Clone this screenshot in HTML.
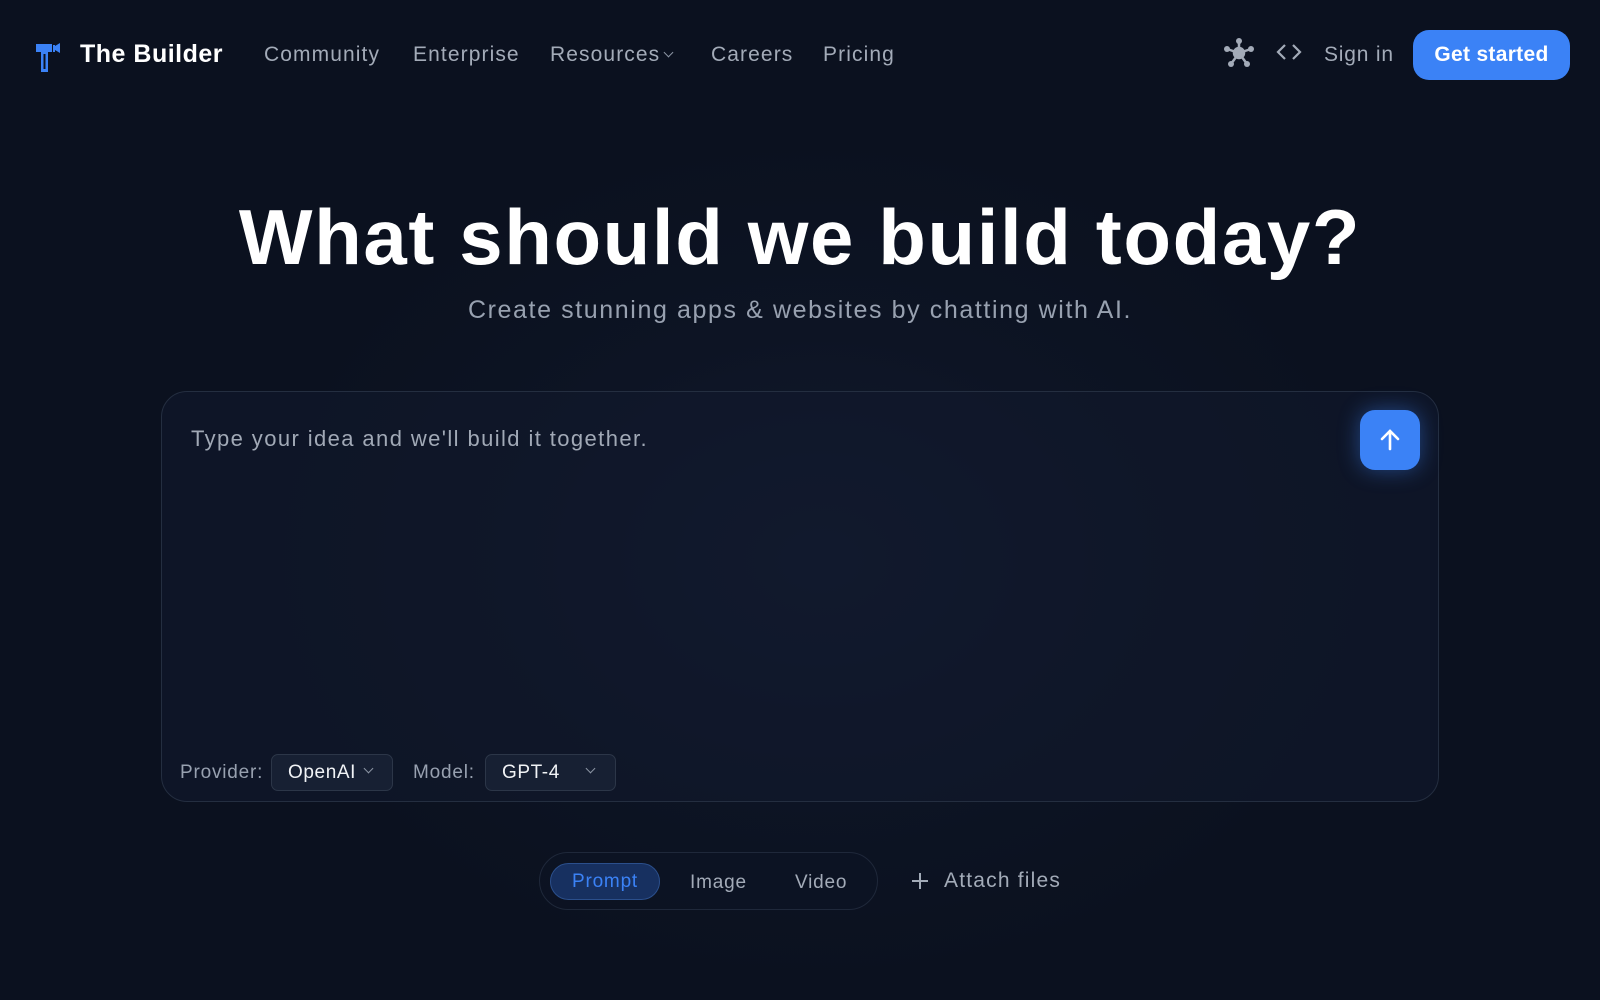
<!DOCTYPE html>
<html><head><meta charset="utf-8"><style>
*{margin:0;padding:0;box-sizing:border-box}
body{width:1600px;height:1000px;overflow:hidden;font-family:"Liberation Sans",sans-serif;color:#9aa3b2;
background:radial-gradient(ellipse 560px 420px at 820px 560px,#111a2e 0%,#0d1424 55%,#0b111f 100%);position:relative}
.a{position:absolute;white-space:nowrap}
.nav{font-size:21px;top:43px;color:#a3abb8;letter-spacing:1.1px}
h1{position:absolute;left:0;width:1600px;text-align:center;top:192px;font-size:78px;font-weight:800;color:#fff;letter-spacing:1.6px}
.sub{left:0;width:1600px;text-align:center;top:296px;font-size:25px;color:#98a1b0;letter-spacing:1.6px}
.box{position:absolute;left:161px;top:391px;width:1278px;height:411px;border:1px solid #242e40;border-radius:26px;background:rgba(18,26,46,.55)}
.sel{position:absolute;top:754px;height:37px;border:1px solid #2c3648;border-radius:7px;background:#172033;color:#f1f3f6;font-size:19px;line-height:35px;padding-left:16px;letter-spacing:.6px}
.chev{position:absolute;width:8px;height:8px;border-right:1.8px solid #8b94a3;border-bottom:1.8px solid #8b94a3;transform:rotate(45deg)}
</style></head><body>
<svg class="a" style="left:35px;top:42px" width="28" height="31" viewBox="0 0 28 31"><path d="M1 2h16v8h-4v20h-7v-20H1z" fill="#3b82f6"/><path d="M8.5 12v15h2V12z" fill="#0b111f"/><path d="M18 3h2v1l5-3v10l-5-3v2h-2z" fill="#3b82f6"/></svg>
<div class="a" style="left:80px;top:40px;font-size:25px;font-weight:700;color:#fff;letter-spacing:.5px">The Builder</div>
<div class="a nav" style="left:264px">Community</div>
<div class="a nav" style="left:413px">Enterprise</div>
<div class="a nav" style="left:550px">Resources</div>
<div class="chev" style="left:665px;top:49px;width:7px;height:7px"></div>
<div class="a nav" style="left:711px">Careers</div>
<div class="a nav" style="left:823px">Pricing</div>
<svg class="a" style="left:1222px;top:36px" width="34" height="34" viewBox="0 0 34 34" fill="#a3abb8" stroke="#a3abb8" stroke-width="2.5"><circle cx="17" cy="17" r="5"/><line x1="17" y1="17" x2="17" y2="5"/><line x1="17" y1="17" x2="5" y2="13"/><line x1="17" y1="17" x2="29" y2="13"/><line x1="17" y1="17" x2="9" y2="28"/><line x1="17" y1="17" x2="25" y2="28"/><circle cx="17" cy="5" r="3" stroke="none"/><circle cx="5" cy="13" r="3" stroke="none"/><circle cx="29" cy="13" r="3" stroke="none"/><circle cx="9" cy="28" r="3" stroke="none"/><circle cx="25" cy="28" r="3" stroke="none"/></svg>
<svg class="a" style="left:1276px;top:42px" width="26" height="20" viewBox="0 0 26 20" fill="none" stroke="#a3abb8" stroke-width="2.2"><path d="M9 3L2 10l7 7M17 3l7 7-7 7"/></svg>
<div class="a nav" style="left:1324px;top:43px;letter-spacing:.8px">Sign in</div>
<div class="a" style="left:1413px;top:30px;width:157px;height:50px;border-radius:16px;background:#3b82f6;color:#fff;font-size:21px;font-weight:700;text-align:center;line-height:50px;letter-spacing:.3px">Get started</div>
<h1>What should we build today?</h1>
<div class="a sub">Create stunning apps &amp; websites by chatting with AI.</div>
<div class="box"></div>
<div class="a" style="left:191px;top:426px;font-size:22px;color:#a1a9b6;letter-spacing:1.4px">Type your idea and we'll build it together.</div>
<div class="a" style="left:1360px;top:410px;width:60px;height:60px;border-radius:15px;background:#3b82f6;box-shadow:0 0 22px rgba(59,130,246,.45)"></div>
<svg class="a" style="left:1376px;top:426px" width="28" height="28" viewBox="0 0 28 28" fill="none" stroke="#fff" stroke-width="2.6" stroke-linecap="round"><path d="M14 23V6M6 13l8-8 8 8"/></svg>
<div class="a" style="left:180px;top:762px;font-size:19px;color:#98a1b0;letter-spacing:.8px">Provider:</div>
<div class="sel" style="left:271px;width:122px">OpenAI</div>
<div class="chev" style="left:365px;top:765px;width:7px;height:7px"></div>
<div class="a" style="left:413px;top:762px;font-size:19px;color:#98a1b0;letter-spacing:.8px">Model:</div>
<div class="sel" style="left:485px;width:131px">GPT-4</div>
<div class="chev" style="left:587px;top:765px;width:7px;height:7px"></div>
<div class="a" style="left:539px;top:852px;width:339px;height:58px;border:1px solid #1f283a;border-radius:29px;background:rgba(14,20,36,.6)"></div>
<div class="a" style="left:550px;top:863px;width:110px;height:37px;border:1px solid #2b4f8c;border-radius:19px;background:#173060;color:#3b82f6;font-size:19px;text-align:center;line-height:35px;letter-spacing:.8px">Prompt</div>
<div class="a" style="left:690px;top:872px;font-size:19px;color:#a3abb8;letter-spacing:.8px">Image</div>
<div class="a" style="left:795px;top:872px;font-size:19px;color:#a3abb8;letter-spacing:.8px">Video</div>
<svg class="a" style="left:911px;top:872px" width="18" height="18" viewBox="0 0 18 18" stroke="#a3abb8" stroke-width="2"><path d="M9 1v16M1 9h16"/></svg>
<div class="a" style="left:944px;top:869px;font-size:21px;color:#a3abb8;letter-spacing:1.2px">Attach files</div>
</body></html>
